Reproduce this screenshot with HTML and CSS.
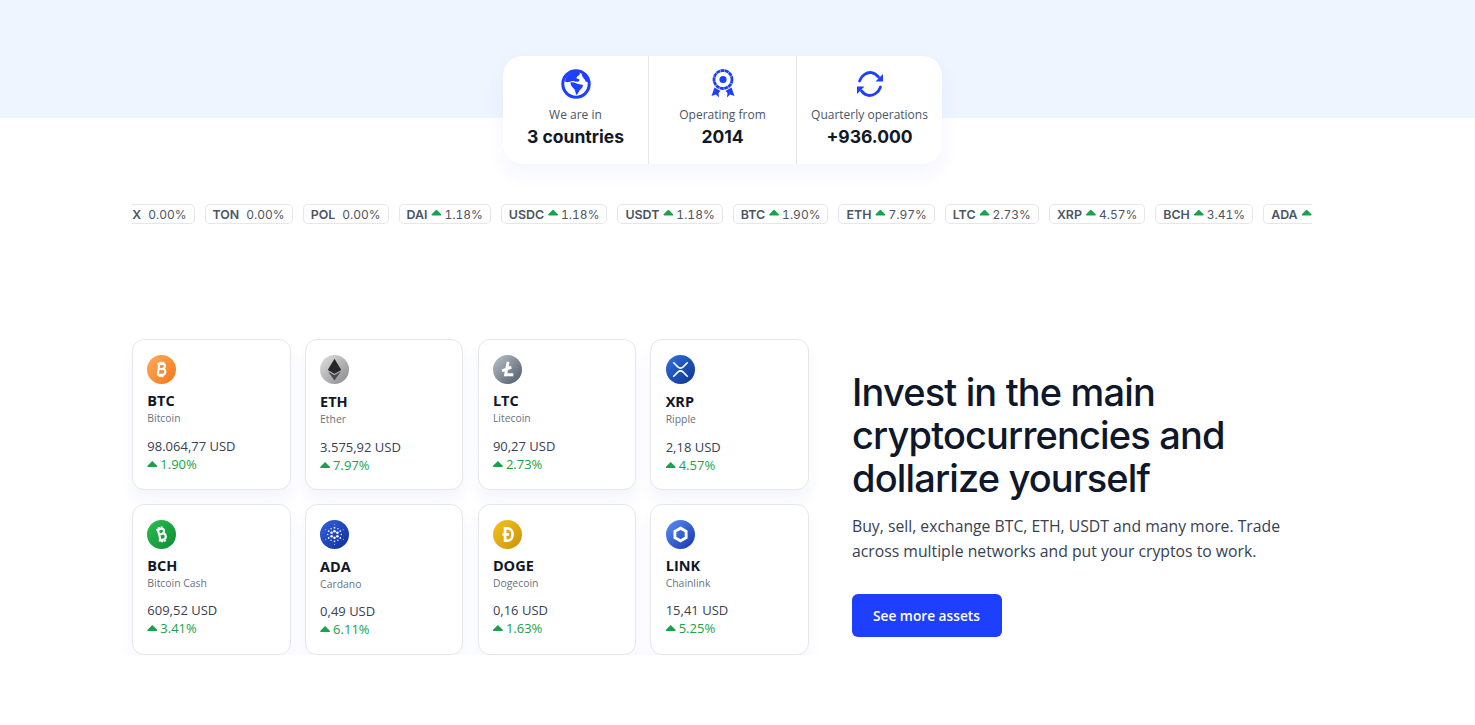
FILE: index.html
```html
<!DOCTYPE html>
<html lang="en">
<head>
    <meta charset="UTF-8">
    <meta name="viewport" content="width=device-width, initial-scale=1.0">
    <title>Invest in the main cryptocurrencies</title>
    <link rel="stylesheet" href="styles.css">
</head>
<body>
    <!-- Stats band -->
    <div class="band">
        <div class="stats">
            <div class="stat">
                <svg class="stat-icon" viewBox="0 0 30 30">
                    <circle cx="15" cy="15" r="13.2" fill="#fff" stroke="#1f3fff" stroke-width="3"/>
                    <path d="M4 12.5 C4.5 7 10 2 17 2 L19 4.5 C19 6.5 15.5 7 15.5 9 C16.5 10.5 19 9.5 18.5 11.5 C17 13.5 14 12.5 12 12 C10 11.5 7 14.5 4 12.5 Z" fill="#1f3fff"/>
                    <path d="M21 3 C24.5 4.5 27 8 28 12.5 L25 13 C24.5 11 23 10 22 8.5 C21 7 20.5 5 21 3 Z" fill="#1f3fff"/>
                    <path d="M9.5 13.5 C12 12.5 15 14 17 15 C19 15.5 21.5 15 22 16.5 C21.5 19 19.5 20 18.5 21.5 C17.5 23 17 25 15.5 26 C14.5 24.5 14.5 22.5 13.5 20.5 C12.5 18.5 9.5 17.5 9.5 13.5 Z" fill="#1f3fff"/>
                </svg>
                <span class="stat-label">We are in</span>
                <strong class="stat-value">3 countries</strong>
            </div>
            <div class="stat">
                <svg class="stat-icon" viewBox="0 0 30 30">
                    <circle cx="15" cy="10.5" r="9" fill="#fff" stroke="#1f3fff" stroke-width="2.8" stroke-dasharray="4 .4"/>
                    <circle cx="15" cy="10.5" r="3.6" fill="#1f3fff"/>
                    <path d="M6.5 18.5 L12.5 22 L10.5 24 L11 28.5 L8 25.5 L3.5 27 Z" fill="#1f3fff"/>
                    <path d="M23.5 18.5 L17.5 22 L19.5 24 L19 28.5 L22 25.5 L26.5 27 Z" fill="#1f3fff"/>
                </svg>
                <span class="stat-label">Operating from</span>
                <strong class="stat-value">2014</strong>
            </div>
            <div class="stat">
                <svg class="stat-icon" viewBox="0 0 30 30">
                    <path d="M4.5 12 C6.5 6 12 3 16.5 3.6 C19.5 4 21.5 5.6 23.5 8" fill="none" stroke="#1f3fff" stroke-width="2.8" stroke-linecap="round"/>
                    <path d="M25.5 18 C23.5 24 18 27 13.5 26.4 C10.5 26 8.5 24.4 6.5 22" fill="none" stroke="#1f3fff" stroke-width="2.8" stroke-linecap="round"/>
                    <path d="M28 5 V12.5 H20.5 Z" fill="#1f3fff"/>
                    <path d="M2 25 V17.5 H9.5 Z" fill="#1f3fff"/>
                </svg>
                <span class="stat-label">Quarterly operations</span>
                <strong class="stat-value">+936.000</strong>
            </div>
        </div>
    </div>

    <div class="container">
        <!-- Ticker -->
        <div class="ticker">
            <div class="ticker-track">
                <span class="pill"><b>TRX</b> 0.00%</span>
                <span class="pill"><b>TON</b> 0.00%</span>
                <span class="pill"><b>POL</b> 0.00%</span>
                <span class="pill up"><b>DAI</b><i class="arrow"></i>1.18%</span>
                <span class="pill up"><b>USDC</b><i class="arrow"></i>1.18%</span>
                <span class="pill up"><b>USDT</b><i class="arrow"></i>1.18%</span>
                <span class="pill up"><b>BTC</b><i class="arrow"></i>1.90%</span>
                <span class="pill up"><b>ETH</b><i class="arrow"></i>7.97%</span>
                <span class="pill up"><b>LTC</b><i class="arrow"></i>2.73%</span>
                <span class="pill up"><b>XRP</b><i class="arrow"></i>4.57%</span>
                <span class="pill up"><b>BCH</b><i class="arrow"></i>3.41%</span>
                <span class="pill up"><b>ADA</b><i class="arrow"></i>6.11%</span>
            </div>
        </div>

        <!-- Assets -->
        <div class="assets">
            <div class="asset-grid">
                <div class="asset">
                    <svg class="coin" viewBox="0 0 30 30">
                        <defs><linearGradient id="g-btc" x1="0" y1="0" x2="1" y2="1"><stop offset="0" stop-color="#fdab5b"/><stop offset="1" stop-color="#f5761a"/></linearGradient></defs>
                        <circle cx="15" cy="15" r="15" fill="url(#g-btc)"/>
                        <path d="M12.6 9.2 H16.4 C18.9 9.2 19.6 12.9 16.6 14.2 C20 14.9 19.6 20.6 15.6 20.6 H10.6 M12.6 9.2 L11.2 20.6 M10.8 9.2 H13 M14.2 7 L13.9 9 M17 7.2 L16.7 9.2 M13.4 20.6 L13.1 23 M16.1 20.6 L15.8 23 M12.4 14.5 H16.4" fill="none" stroke="#fff" stroke-width="2.2"/>
                    </svg>
                    <h4>BTC</h4>
                    <small>Bitcoin</small>
                    <p class="price">98.064,77 USD</p>
                    <p class="change"><i class="arrow"></i>1.90%</p>
                </div>
                <div class="asset">
                    <svg class="coin" viewBox="0 0 30 30">
                        <defs><linearGradient id="g-eth" x1="0" y1="0" x2="1" y2="1"><stop offset="0" stop-color="#e2e2e4"/><stop offset="1" stop-color="#88888c"/></linearGradient></defs>
                        <circle cx="15" cy="15" r="15" fill="url(#g-eth)"/>
                        <path d="M15 4 L22 15.4 L15 19.4 L8 15.4 Z" fill="#26262a"/>
                        <path d="M15 21 L21.6 17 L15 26.4 L8.4 17 Z" fill="#4a4a50"/>
                    </svg>
                    <h4>ETH</h4>
                    <small>Ether</small>
                    <p class="price">3.575,92 USD</p>
                    <p class="change"><i class="arrow"></i>7.97%</p>
                </div>
                <div class="asset">
                    <svg class="coin" viewBox="0 0 30 30">
                        <defs><linearGradient id="g-ltc" x1="0" y1="0" x2="1" y2="1"><stop offset="0" stop-color="#bcc3cc"/><stop offset="1" stop-color="#4d5766"/></linearGradient></defs>
                        <circle cx="15" cy="15" r="15" fill="url(#g-ltc)"/>
                        <path d="M15.6 7 L13 20.4 H21 M9.4 16.4 L19 12.6" fill="none" stroke="#fff" stroke-width="3"/>
                    </svg>
                    <h4>LTC</h4>
                    <small>Litecoin</small>
                    <p class="price">90,27 USD</p>
                    <p class="change"><i class="arrow"></i>2.73%</p>
                </div>
                <div class="asset">
                    <svg class="coin" viewBox="0 0 30 30">
                        <defs><linearGradient id="g-xrp" x1="0" y1="0" x2="1" y2="1"><stop offset="0" stop-color="#3271db"/><stop offset="1" stop-color="#0d3390"/></linearGradient></defs>
                        <circle cx="15" cy="15" r="15" fill="url(#g-xrp)"/>
                        <path d="M7.5 7.5 L12.2 12.3 Q15 14.8 17.8 12.3 L22.5 7.5 M7.5 22.5 L12.2 17.7 Q15 15.2 17.8 17.7 L22.5 22.5" fill="none" stroke="#fff" stroke-width="1.6"/>
                    </svg>
                    <h4>XRP</h4>
                    <small>Ripple</small>
                    <p class="price">2,18 USD</p>
                    <p class="change"><i class="arrow"></i>4.57%</p>
                </div>
                <div class="asset">
                    <svg class="coin" viewBox="0 0 30 30">
                        <defs><linearGradient id="g-bch" x1="0" y1="0" x2="1" y2="1"><stop offset="0" stop-color="#2cc04f"/><stop offset="1" stop-color="#0c8a35"/></linearGradient></defs>
                        <circle cx="15" cy="15" r="15" fill="url(#g-bch)"/>
                        <g transform="rotate(-14 15 15)">
                            <path d="M12.6 9.2 H16.4 C18.9 9.2 19.6 12.9 16.6 14.2 C20 14.9 19.6 20.6 15.6 20.6 H10.6 M12.6 9.2 L12.6 20.6 M10.8 9.2 H13 M14 7 V9 M16.8 7 V9 M14 20.6 V23 M16.8 20.6 V23 M12.4 14.5 H16.4" fill="none" stroke="#fff" stroke-width="2.2"/>
                        </g>
                    </svg>
                    <h4>BCH</h4>
                    <small>Bitcoin Cash</small>
                    <p class="price">609,52 USD</p>
                    <p class="change"><i class="arrow"></i>3.41%</p>
                </div>
                <div class="asset">
                    <svg class="coin" viewBox="0 0 30 30">
                        <defs><linearGradient id="g-ada" x1="0" y1="0" x2="1" y2="1"><stop offset="0" stop-color="#3462e0"/><stop offset="1" stop-color="#0c2c98"/></linearGradient></defs>
                        <circle cx="15" cy="15" r="15" fill="url(#g-ada)"/>
                        <g fill="#fff">
                            <circle cx="15" cy="11.6" r="1.3"/><circle cx="15" cy="18.4" r="1.3"/><circle cx="12" cy="13.3" r="1.3"/><circle cx="18" cy="13.3" r="1.3"/><circle cx="12" cy="16.7" r="1.3"/><circle cx="18" cy="16.7" r="1.3"/>
                            <circle cx="15" cy="8" r=".9"/><circle cx="15" cy="22" r=".9"/><circle cx="9" cy="11.5" r=".9"/><circle cx="21" cy="11.5" r=".9"/><circle cx="9" cy="18.5" r=".9"/><circle cx="21" cy="18.5" r=".9"/>
                            <circle cx="11.5" cy="9" r=".7"/><circle cx="18.5" cy="9" r=".7"/><circle cx="11.5" cy="21" r=".7"/><circle cx="18.5" cy="21" r=".7"/><circle cx="8" cy="15" r=".7"/><circle cx="22" cy="15" r=".7"/>
                            <circle cx="15" cy="5" r=".5"/><circle cx="15" cy="25" r=".5"/><circle cx="6" cy="10" r=".5"/><circle cx="24" cy="10" r=".5"/><circle cx="6" cy="20" r=".5"/><circle cx="24" cy="20" r=".5"/>
                        </g>
                    </svg>
                    <h4>ADA</h4>
                    <small>Cardano</small>
                    <p class="price">0,49 USD</p>
                    <p class="change"><i class="arrow"></i>6.11%</p>
                </div>
                <div class="asset">
                    <svg class="coin" viewBox="0 0 30 30">
                        <defs><linearGradient id="g-doge" x1="0" y1="0" x2="1" y2="1"><stop offset="0" stop-color="#f6c21c"/><stop offset="1" stop-color="#c9940a"/></linearGradient></defs>
                        <circle cx="15" cy="15" r="15" fill="url(#g-doge)"/>
                        <path d="M12.5 8.6 H15 C22 8.6 22 21.4 15 21.4 H12.5 Z M9.6 15 H16.6" fill="none" stroke="#fff" stroke-width="2.8"/>
                    </svg>
                    <h4>DOGE</h4>
                    <small>Dogecoin</small>
                    <p class="price">0,16 USD</p>
                    <p class="change"><i class="arrow"></i>1.63%</p>
                </div>
                <div class="asset">
                    <svg class="coin" viewBox="0 0 30 30">
                        <defs><linearGradient id="g-link" x1="0" y1="0" x2="1" y2="1"><stop offset="0" stop-color="#5a93f2"/><stop offset="1" stop-color="#1533b0"/></linearGradient></defs>
                        <circle cx="15" cy="15" r="15" fill="url(#g-link)"/>
                        <path d="M15 8.4 L20.8 11.7 V18.3 L15 21.6 L9.2 18.3 V11.7 Z" fill="none" stroke="#fff" stroke-width="3"/>
                    </svg>
                    <h4>LINK</h4>
                    <small>Chainlink</small>
                    <p class="price">15,41 USD</p>
                    <p class="change"><i class="arrow"></i>5.25%</p>
                </div>
            </div>

            <div class="assets-copy">
                <h1>Invest in the main cryptocurrencies and dollarize yourself</h1>
                <p>Buy, sell, exchange BTC, ETH, USDT and many more. Trade across multiple networks and put your cryptos to work.</p>
                <a class="btn" href="#">See more assets</a>
            </div>
        </div>
    </div>
</body>
</html>
```

FILE: styles.css
```css
body {
    font-family: "Open Sans", Arial, sans-serif;
    margin: 0;
    padding: 0;
    background-color: #fff;
    color: #374151;
}

h1, h4, p {
    margin: 0;
}

.band {
    height: 118px;
    background-color: #eef5ff;
    padding-top: 56px;
    box-sizing: border-box;
}

.stats {
    display: grid;
    grid-template-columns: 145px 148px 146px;
    width: 439px;
    height: 108px;
    margin-left: 503px;
    background-color: #fff;
    border-radius: 20px;
    box-shadow: 0 10px 20px rgba(31, 63, 255, 0.05);
}

.stat {
    display: flex;
    flex-direction: column;
    align-items: center;
    padding-top: 13px;
    border-left: 1px solid #e5e7eb;
}

.stat:first-child {
    border-left: 0;
}

.stat-icon {
    width: 30px;
    height: 30px;
    margin-bottom: 7px;
}

.stat-label {
    font-size: 12px;
    line-height: 18px;
    color: #4b5563;
    white-space: nowrap;
}

.stat-value {
    font-family: Inter, Arial, sans-serif;
    font-size: 17.5px;
    font-weight: 700;
    line-height: 26px;
    color: #111827;
}

.container {
    width: 1180px;
    margin-left: 132px;
}

.ticker {
    margin-top: 86px;
    overflow: hidden;
}

.ticker-track {
    display: flex;
    gap: 10px;
    margin-left: -24px;
    width: 1400px;
}

.pill {
    display: flex;
    align-items: center;
    gap: 3px;
    height: 20px;
    box-sizing: border-box;
    padding: 0 7px;
    border: 1px solid #e5e7eb;
    border-radius: 5px;
    font-family: Inter, Arial, sans-serif;
    font-size: 12px;
    font-variant-numeric: tabular-nums;
    color: #4b5563;
    white-space: nowrap;
}

.pill b {
    font-size: 12.4px;
    font-weight: 600;
    margin-right: 4px;
}

.pill.up b {
    margin-right: 1px;
}

.arrow {
    display: inline-block;
    width: 10px;
    height: 6px;
    background-color: #16a34a;
    clip-path: polygon(50% 0, 100% 85%, 95% 100%, 5% 100%, 0 85%);
    margin-bottom: 3px;
}

.assets {
    display: flex;
    margin-top: 115px;
}

.asset-grid {
    display: grid;
    grid-template-columns: repeat(4, 1fr);
    grid-auto-rows: 151px;
    gap: 14px 14.2px;
    width: 677px;
}

.asset {
    box-sizing: border-box;
    padding: 15px 14px 15px 14.3px;
    border: 1px solid #e5e7eb;
    border-radius: 12px;
    background-color: #fff;
    box-shadow: 0 10px 14px rgba(31, 63, 255, 0.05);
}

.coin {
    display: block;
    width: 29px;
    height: 29px;
    margin-bottom: 8px;
}

.asset:nth-child(2) .coin,
.asset:nth-child(4) .coin,
.asset:nth-child(6) .coin {
    margin-bottom: 9px;
}

.asset h4 {
    font-size: 14.5px;
    font-weight: 700;
    line-height: 18px;
    color: #111827;
}

.asset small {
    display: block;
    font-size: 10.4px;
    line-height: 16px;
    color: #6b7280;
}

.price {
    margin-top: 11px;
    font-size: 13px;
    line-height: 18px;
}

.asset:nth-child(n+5) .price {
    margin-top: 10px;
}

.change {
    font-size: 13px;
    line-height: 18px;
    color: #16a34a;
}

.change .arrow {
    margin: 0 3px 2px 0;
}

.assets-copy {
    margin-left: 43px;
    width: 440px;
    padding-top: 32px;
}

.assets-copy h1 {
    font-family: Inter, Arial, sans-serif;
    font-size: 38px;
    font-weight: 500;
    letter-spacing: -0.85px;
    line-height: 43px;
    color: #0f172a;
}

.assets-copy p {
    margin-top: 14px;
    font-size: 15.75px;
    line-height: 25px;
    color: #374151;
}

.btn {
    display: inline-block;
    margin-top: 30px;
    padding: 0 22px 0 21px;
    height: 43px;
    line-height: 43px;
    background-color: #1f3fff;
    border-radius: 6px;
    color: #fff;
    font-size: 13.7px;
    font-weight: 600;
    text-decoration: none;
}
```
